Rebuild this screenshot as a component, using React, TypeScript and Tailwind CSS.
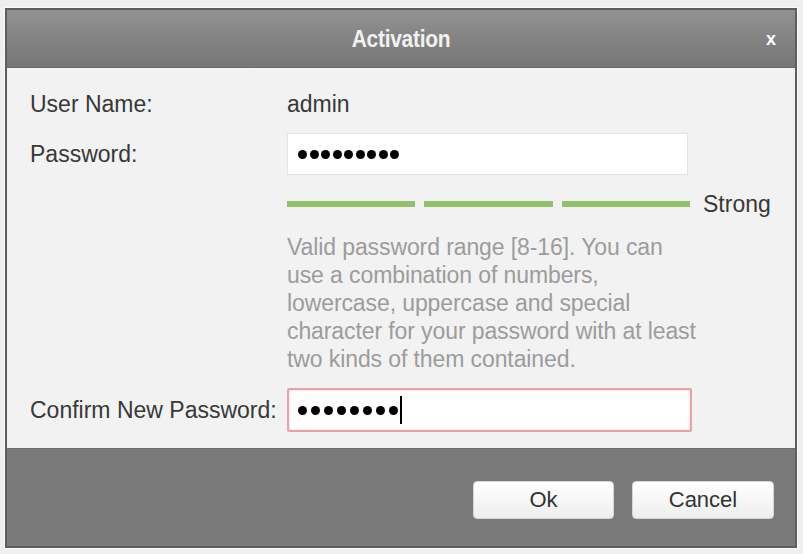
import { useState } from "react";

const font = { fontFamily: '"Liberation Sans", Arial, sans-serif' };

const Dots = ({ count, gap }: { count: number; gap: string }) => {
  return (
    <div className={`flex items-center ${gap}`}>
      {Array.from({ length: count }).map((_, i) => (
        <div key={i} className="w-[9px] h-[9px] rounded-full bg-black" />
      ))}
    </div>
  );
};

const App = () => {
  const [bars] = useState<number[]>([128, 129, 128]);

  return (
    <div
      className="w-[803px] h-[554px] bg-[#efefef] pl-[5px] pt-[8px] overflow-hidden"
      style={font}
    >
      <div className="w-[792px] h-[540px] border-2 border-[#5e5e5e] flex flex-col bg-[#f2f2f2] shadow-[0_0_0_1px_#fafafa]">
        {/* title */}
        <div className="relative h-[58px] shrink-0 flex items-center justify-center bg-gradient-to-b from-[#929292] to-[#767676] border-b border-[#6c6c6c]">
          <span className="text-[21px] font-bold text-[#f1f1f1] tracking-[-0.3px] scale-y-110">
            Activation
          </span>
          <span className="absolute right-[19px] top-[16px] text-[18px] font-bold text-white">
            x
          </span>
        </div>

        {/* body */}
        <div className="h-[380px] shrink-0 pt-[16px] pl-[23px] text-[23px] text-[#383838] leading-none">
          <div className="flex items-center h-[40px]">
            <div className="w-[257px]">User Name:</div>
            <div>admin</div>
          </div>

          <div className="flex items-center h-[42px] mt-[9px]">
            <div className="w-[257px]">Password:</div>
            <div className="w-[401px] h-[42px] bg-white border border-[#e3e3e3] flex items-center pl-[10px]">
              <Dots count={9} gap="gap-[2.5px]" />
            </div>
          </div>

          <div className="flex items-center h-[6px] mt-[26px] pl-[257px]">
            {bars.map((w, i) => (
              <div
                key={i}
                className="h-[6px] bg-[#92c06e] mr-[9px]"
                style={{ width: w }}
              />
            ))}
            <span className="ml-[4px] text-[#383838]">Strong</span>
          </div>

          <div className="mt-[26px] pl-[257px] text-[#9c9c9c] leading-[28px] whitespace-nowrap tracking-[-0.1px]">
            <div>Valid password range [8-16]. You can</div>
            <div>use a combination of numbers,</div>
            <div>lowercase, uppercase and special</div>
            <div>character for your password with at least</div>
            <div>two kinds of them contained.</div>
          </div>

          <div className="flex items-center h-[44px] mt-[15px]">
            <div className="w-[257px]">Confirm New Password:</div>
            <div className="w-[405px] h-[44px] bg-white border-2 border-[#e2a3ab] rounded-[2px] shadow-[inset_0_0_3px_#f3c9ce] flex items-center pl-[9px]">
              <Dots count={8} gap="gap-[4px]" />
              <div className="w-[2px] h-[28px] bg-black ml-[2px]" />
            </div>
          </div>
        </div>

        {/* footer */}
        <div className="flex-1 bg-[#7a7a7a] border-t border-[#6e6e6e] flex items-center justify-end pr-[21px] pt-[4px] gap-[18px]">
          <button className="w-[141px] h-[38px] rounded-[4px] bg-gradient-to-b from-white to-[#eeeeee] border border-[#d6d6d6] text-[22px] text-[#333]">
            Ok
          </button>
          <button className="w-[142px] h-[38px] rounded-[4px] bg-gradient-to-b from-white to-[#eeeeee] border border-[#d6d6d6] text-[22px] text-[#333]">
            Cancel
          </button>
        </div>
      </div>
    </div>
  );
};

export default App;
